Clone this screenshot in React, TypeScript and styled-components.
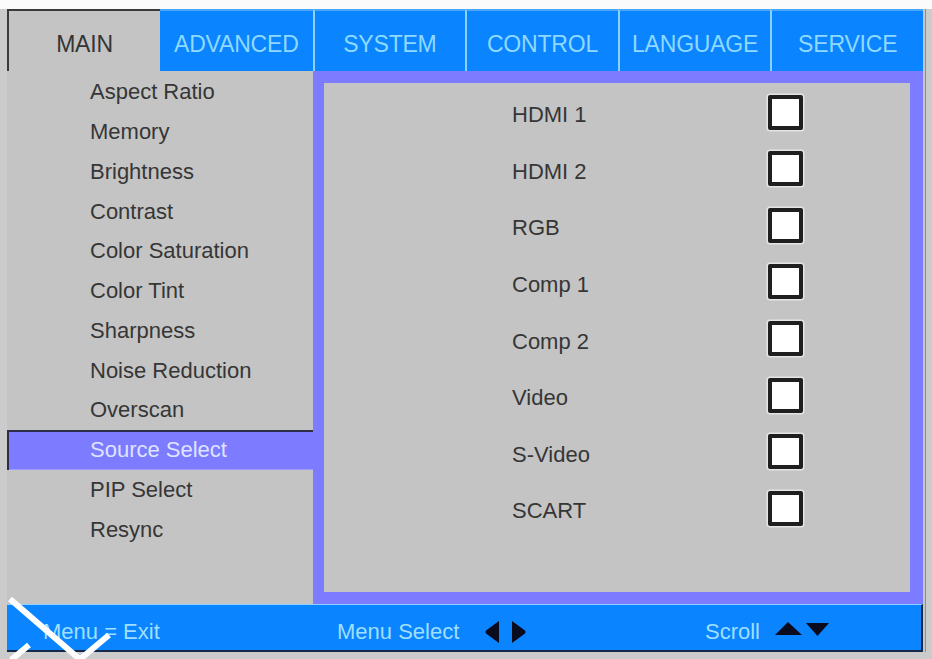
import styled, { createGlobalStyle } from "styled-components";

const GlobalStyle = createGlobalStyle`
  html, body {
    margin: 0;
    padding: 0;
    background: #cbcbcb;
  }
  body {
    font-family: "Liberation Sans", Arial, sans-serif;
  }
`;

const Screen = styled.div`
  position: relative;
  width: 932px;
  height: 659px;
  box-sizing: border-box;
  border-top: 9px solid #fbfbfb;
  padding: 0 9px 7px 7px;
  background: #cbcbcb;
  overflow: hidden;
`;

const Frame = styled.div`
  display: grid;
  grid-template-rows: 62px 533px 48px;
  width: 916px;
  background: #c4c4c4;
  box-shadow: 2px 0 0 #c6c6c6, 3px 0 0 #8e8e8e;
`;

/* ---------- tab strip ---------- */

const TabStrip = styled.div`
  display: grid;
  grid-template-columns: 153px repeat(5, 1fr);
`;

const Tab = styled.div<{ $active?: boolean; $divider?: boolean }>`
  display: flex;
  align-items: center;
  justify-content: center;
  box-sizing: border-box;
  padding-top: 7px;
  font-size: 23px;
  letter-spacing: -0.2px;
  color: ${(p) => (p.$active ? "#353535" : "#8fd9ff")};
  background: ${(p) => (p.$active ? "#c4c4c4" : "#0a84ff")};
  border-top: ${(p) => (p.$active ? "2px solid #3a3a3a" : "2px solid #4aa6f6")};
  border-left: ${(p) =>
    p.$active ? "2px solid #3a3a3a" : p.$divider ? "2px solid #86d4ff" : "none"};
`;

/* ---------- body ---------- */

const Body = styled.div`
  display: grid;
  grid-template-columns: 306px 1fr;
  min-height: 0;
`;

const MenuList = styled.ul`
  list-style: none;
  margin: 0;
  padding: 1.5px 0 0;
`;

const MenuItem = styled.li<{ $selected?: boolean }>`
  display: flex;
  align-items: center;
  height: 39.75px;
  box-sizing: border-box;
  padding-left: 83px;
  font-size: 22px;
  color: ${(p) => (p.$selected ? "#dfe4ff" : "#363636")};
  background: ${(p) => (p.$selected ? "#7d7bff" : "transparent")};
  box-shadow: ${(p) =>
    p.$selected ? "inset 2px 2px 0 #2e2e48, inset 0 -1px 0 #9c9aff" : "none"};
`;

const SourcePanel = styled.div`
  background: #7d7bff;
  padding: 12px 13px 12px 11px;
`;

const SourceInner = styled.div`
  height: 100%;
  background: #c4c4c4;
  box-sizing: border-box;
  padding-top: 4px;
`;

const SourceRow = styled.div`
  display: grid;
  grid-template-columns: 188px 256px 35px;
  align-items: center;
  height: 56.57px;
`;

const SourceName = styled.span`
  grid-column: 2;
  font-size: 22px;
  color: #363636;
`;

const CheckBox = styled.span`
  grid-column: 3;
  width: 35px;
  height: 35px;
  box-sizing: border-box;
  margin-bottom: 6px;
  border: 4px solid #1f1f1f;
  border-radius: 2px;
  background: #fff;
  box-shadow: 0 0 0 1.5px #e4e4e4;
`;

/* ---------- footer ---------- */

const Footer = styled.div`
  display: grid;
  grid-template-columns: 294px 368px auto;
  align-items: center;
  box-sizing: border-box;
  padding: 8px 0 0 36px;
  background: #0a84ff;
  border-top: 1px solid #8fd2ff;
  border-right: 2px solid #152a48;
  border-bottom: 2px solid #152a48;
`;

const Hint = styled.div<{ $gap?: number }>`
  display: flex;
  align-items: center;
  gap: ${(p) => p.$gap ?? 0}px;
  font-size: 22px;
  color: #9fdfff;
`;

const KeyGlyphs = styled.svg<{ $lift?: number }>`
  display: block;
  fill: #0b0b1e;
  margin-bottom: ${(p) => p.$lift ?? 0}px;
`;

const Stamp = styled.svg`
  position: absolute;
  left: 0;
  bottom: 0;
  pointer-events: none;
`;

const menu = [
  "Aspect Ratio",
  "Memory",
  "Brightness",
  "Contrast",
  "Color Saturation",
  "Color Tint",
  "Sharpness",
  "Noise Reduction",
  "Overscan",
  "Source Select",
  "PIP Select",
  "Resync",
];

const sources = ["HDMI 1", "HDMI 2", "RGB", "Comp 1", "Comp 2", "Video", "S-Video", "SCART"];

const tabs = ["MAIN", "ADVANCED", "SYSTEM", "CONTROL", "LANGUAGE", "SERVICE"];

export default function App() {
  return (
    <>
      <GlobalStyle />
      <Screen>
        <Frame>
          <TabStrip>
            {tabs.map((t, i) => (
              <Tab key={t} $active={i === 0} $divider={i > 1}>
                {t}
              </Tab>
            ))}
          </TabStrip>

          <Body>
            <MenuList>
              {menu.map((m) => (
                <MenuItem key={m} $selected={m === "Source Select"}>
                  {m}
                </MenuItem>
              ))}
            </MenuList>
            <SourcePanel>
              <SourceInner>
                {sources.map((s) => (
                  <SourceRow key={s}>
                    <SourceName>{s}</SourceName>
                    <CheckBox />
                  </SourceRow>
                ))}
              </SourceInner>
            </SourcePanel>
          </Body>

          <Footer>
            <Hint>Menu = Exit</Hint>
            <Hint $gap={26}>
              Menu Select
              <KeyGlyphs width="41" height="22" viewBox="0 0 41 22">
                <path d="M14 0 L14 22 L1 12.5 Q0 11 1 9.5 Z" />
                <path d="M27 0 L27 22 L40 12.5 Q41 11 40 9.5 Z" />
              </KeyGlyphs>
            </Hint>
            <Hint $gap={15}>
              Scroll
              <KeyGlyphs width="54" height="16" viewBox="0 0 54 16" $lift={6}>
                <path d="M0 14 L13 1 L27 14 Z" />
                <path d="M31 2 L54 2 L42.5 15 Z" />
              </KeyGlyphs>
            </Hint>
          </Footer>
        </Frame>

        {/* white check-mark stamp over the lower left corner */}
        <Stamp width="140" height="70" viewBox="0 0 140 70">
          <g stroke="#ffffff" strokeWidth="6" fill="none">
            <line x1="10" y1="10" x2="84" y2="74" />
            <line x1="109" y1="46" x2="78" y2="72" />
            <line x1="11" y1="71" x2="29" y2="56" />
          </g>
        </Stamp>
      </Screen>
    </>
  );
}
